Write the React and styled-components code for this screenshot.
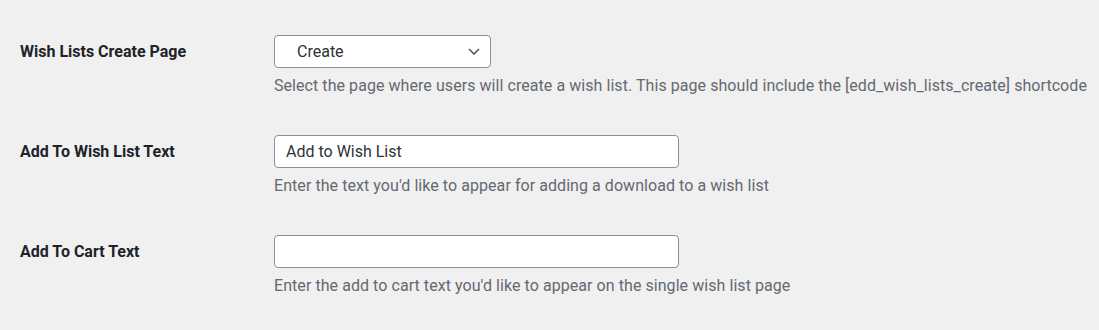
import React from "react";
import styled, { createGlobalStyle } from "styled-components";

const GlobalStyle = createGlobalStyle`
  html, body {
    margin: 0;
    padding: 0;
    background: #f0f0f1;
  }
  body {
    font-family: Roboto, "Liberation Sans", sans-serif;
    color: #1d2327;
  }
`;

const FormTable = styled.div`
  padding: 19px 0 0 20px;
  display: flex;
  flex-direction: column;
`;

const Row = styled.div`
  display: grid;
  grid-template-columns: 254px 1fr;
  height: 100px;
  padding-top: 16px;
  box-sizing: border-box;
`;

const Label = styled.label`
  font-size: 16px;
  font-weight: 700;
  line-height: 34px;
  color: #1d2327;
`;

const Field = styled.div`
  display: flex;
  flex-direction: column;
  align-items: flex-start;
`;

const TextInput = styled.input`
  width: 405px;
  height: 33px;
  box-sizing: border-box;
  padding: 0 11px;
  border: 1px solid #8c8f94;
  border-radius: 4px;
  background: #fff;
  font-family: inherit;
  font-size: 16px;
  color: #2c3338;
  outline: none;
`;

const SelectBox = styled.div`
  position: relative;
  width: 217px;
  height: 33px;
  box-sizing: border-box;
  border: 1px solid #8c8f94;
  border-radius: 4px;
  background: #fff;
  display: flex;
  align-items: center;
  padding: 0 22px;
  font-size: 16px;
  color: #2c3338;
`;

const Chevron = styled.svg`
  position: absolute;
  right: 10px;
  top: 12px;
`;

const Description = styled.p`
  margin: 8px 0 0;
  font-size: 16px;
  line-height: 20px;
  letter-spacing: 0.06px;
  color: #646970;
`;

const rows = [
  {
    label: "Wish Lists Create Page",
    type: "select",
    value: "Create",
    desc: "Select the page where users will create a wish list. This page should include the [edd_wish_lists_create] shortcode",
  },
  {
    label: "Add To Wish List Text",
    type: "text",
    value: "Add to Wish List",
    desc: "Enter the text you'd like to appear for adding a download to a wish list",
  },
  {
    label: "Add To Cart Text",
    type: "text",
    value: "",
    desc: "Enter the add to cart text you'd like to appear on the single wish list page",
  },
];

const App = () => {
  return (
    <>
      <GlobalStyle />
      <FormTable>
        {rows.map((row, index) => (
          <Row key={index}>
            <Label>{row.label}</Label>
            <Field>
              {row.type === "select" ? (
                <SelectBox>
                  {row.value}
                  <Chevron width="12" height="7" viewBox="0 0 12 7">
                    <path
                      d="M1 1l5 5 5-5"
                      fill="none"
                      stroke="#50575e"
                      strokeWidth="1.6"
                    />
                  </Chevron>
                </SelectBox>
              ) : (
                <TextInput type="text" defaultValue={row.value} />
              )}
              <Description>{row.desc}</Description>
            </Field>
          </Row>
        ))}
      </FormTable>
    </>
  );
};

export default App;
